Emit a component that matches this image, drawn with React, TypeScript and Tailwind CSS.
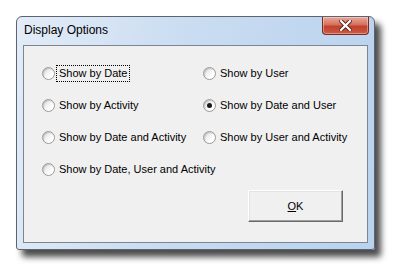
import React from "react";

const options = [
  { label: "Show by Date", checked: false, focus: true },
  { label: "Show by User", checked: false },
  { label: "Show by Activity", checked: false },
  { label: "Show by Date and User", checked: true },
  { label: "Show by Date and Activity", checked: false },
  { label: "Show by User and Activity", checked: false },
  { label: "Show by Date, User and Activity", checked: false },
];

const Radio = ({ checked }: { checked: boolean }) => (
  <span className="flex h-[13px] w-[13px] shrink-0 items-center justify-center rounded-full border border-[#9a9a9a] bg-[linear-gradient(135deg,#dcdcdc,#ffffff_70%)] shadow-[inset_1px_1px_1px_rgba(0,0,0,0.15)]">
    {checked && <span className="h-[5px] w-[5px] rounded-full bg-[#1a1a1a]" />}
  </span>
);

export default function App() {
  return (
    <div className="h-[268px] w-[393px] bg-white pl-[16px] pt-[16px] font-['Liberation_Sans',Arial,sans-serif]">
      <div className="h-[234px] w-[359px] rounded-t-[6px] rounded-b-[3px] border border-[#5b6470] bg-[linear-gradient(100deg,#e3ecf7_0%,#c9dcf1_45%,#b9d2ee_100%)] px-[6px] pb-[6px] shadow-[6px_7px_6px_rgba(0,0,0,0.7)]">
        <div className="flex h-[28px] items-start justify-between">
          <span className="ml-[1px] mt-[6px] text-[12px] leading-[14px] text-black">
            Display Options
          </span>
          <div className="mr-[-1px] flex h-[18px] w-[47px] items-center justify-center rounded-b-[4px] border border-t-0 border-[#7e2a20] bg-[linear-gradient(180deg,#e9a99b_0%,#d6705d_45%,#c2412d_55%,#cc5a45_100%)] shadow-[inset_0_0_0_1px_rgba(255,255,255,0.35)]">
            <svg width="13" height="11" viewBox="0 0 13 11">
              <path
                d="M2 1 L6.5 5.5 M11 1 L6.5 5.5 M2 10 L6.5 5.5 M11 10 L6.5 5.5"
                stroke="#5a1f18"
                strokeWidth="4"
                strokeLinecap="square"
              />
              <path
                d="M2 1 L11 10 M11 1 L2 10"
                stroke="#ffffff"
                strokeWidth="2.2"
                strokeLinecap="square"
              />
            </svg>
          </div>
        </div>
        <div className="h-[198px] w-[345px] border border-[#7b8593] bg-[#f0f0f0]">
          <div className="grid grid-cols-[161px_1fr] pl-[18px] pt-[11px]">
            {options.map((o) => (
              <div key={o.label} className="flex h-[32px] items-center whitespace-nowrap">
                <Radio checked={o.checked} />
                <span
                  className={`ml-[1px] px-[2px] text-[11px] leading-[15px] text-black ${
                    o.focus ? "border border-dotted border-black" : "border border-transparent"
                  }`}
                >
                  {o.label}
                </span>
              </div>
            ))}
          </div>
          <div className="mt-[5px] flex justify-end pr-[24px]">
            <button className="flex h-[32px] w-[95px] items-center justify-center border border-b-[#696969] border-l-white border-r-[#696969] border-t-white bg-[#f0f0f0] text-[11px] text-black shadow-[inset_-1px_-1px_0_#a0a0a0,inset_1px_1px_0_#e3e3e3]">
              <span>
                <span className="underline">O</span>K
              </span>
            </button>
          </div>
        </div>
      </div>
    </div>
  );
}
